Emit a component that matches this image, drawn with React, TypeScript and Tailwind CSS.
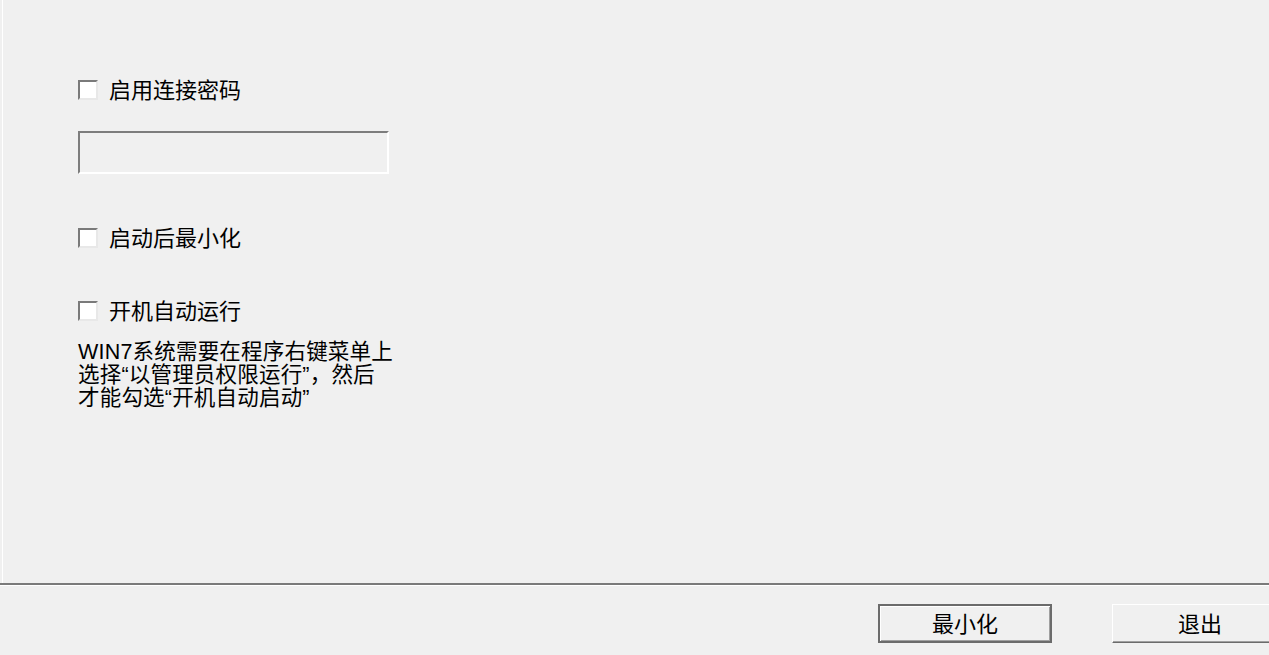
const font = { fontFamily: '"Noto Sans CJK SC", "Liberation Sans", sans-serif' };

function CheckRow({ label }: { label: string }) {
  return (
    <div className="flex h-[21px] items-center gap-[11px]">
      <span className="block h-[20px] w-[20px] border-2 border-t-[#7a7a7a] border-l-[#7a7a7a] border-r-[#e8e8e8] border-b-[#e8e8e8] bg-white" />
      <span className="-translate-y-[2px] text-[22px] leading-none text-black">{label}</span>
    </div>
  );
}

export default function App() {
  return (
    <div
      className="flex h-[655px] w-[1269px] flex-col overflow-hidden bg-[#f0f0f0] text-black"
      style={font}
    >
      <div className="pl-[2px]">
        <div className="h-[583px] border-l border-white pt-[79px] pl-[75px]">
          <CheckRow label="启用连接密码" />
          <div className="mt-[31px] h-[43px] w-[311px] border-2 border-t-[#7d7d7d] border-l-[#7d7d7d] border-r-white border-b-white bg-[#f0f0f0]" />
          <div className="mt-[53px]">
            <CheckRow label="启动后最小化" />
          </div>
          <div className="mt-[52px]">
            <CheckRow label="开机自动运行" />
          </div>
          <div className="mt-[20px] font-['Liberation_Sans','Noto_Sans_CJK_SC',sans-serif] text-[21.5px] leading-[23px] tracking-[0.2px]">
            <div className="h-[23px]">WIN7系统需要在程序右键菜单上</div>
            <div className="h-[23px]">选择“以管理员权限运行”，然后</div>
            <div className="h-[23px]">才能勾选“开机自动启动”</div>
          </div>
        </div>
      </div>
      <div className="h-[2px] bg-[#7a7a7a]" />
      <div className="h-px bg-white" />
      <div className="flex justify-end gap-[60px] pt-[18px] -mr-[19px]">
        <button className="h-[39px] w-[174px] border-2 border-[#6b6b6b] bg-[#f0f0f0] pb-[3px] text-[22px] leading-none shadow-[inset_1px_1px_0_#ffffff,inset_-1px_-1px_0_#a0a0a0]">
          最小化
        </button>
        <button className="h-[39px] w-[176px] border border-t-white border-l-white border-r-[#6b6b6b] border-b-[#6b6b6b] bg-[#f0f0f0] pb-[3px] text-[22px] leading-none shadow-[inset_-1px_-1px_0_#a0a0a0]">
          退出
        </button>
      </div>
    </div>
  );
}
